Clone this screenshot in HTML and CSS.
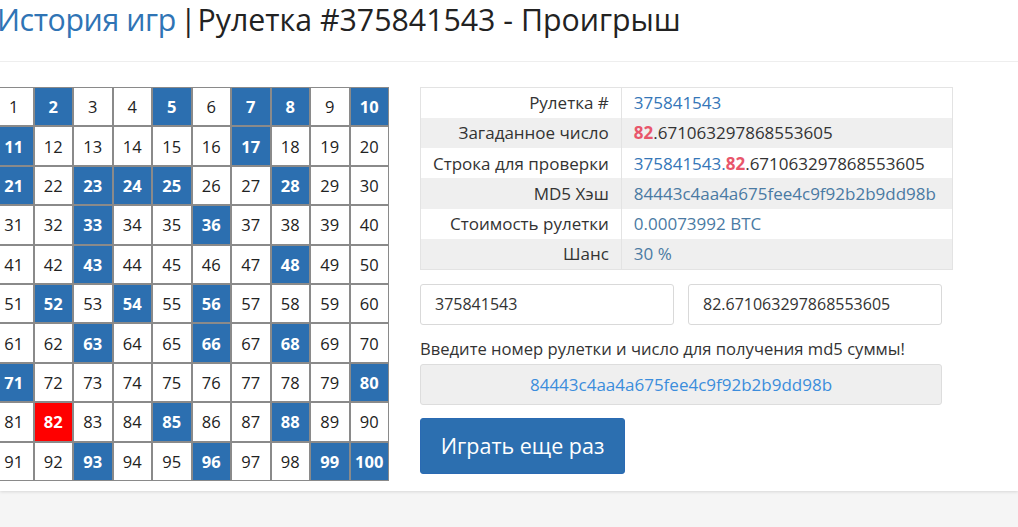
FILE: index.html
```html
<!DOCTYPE html>
<html lang="ru">
<head>
<meta charset="utf-8">
<title>Рулетка #375841543</title>
<link rel="stylesheet" href="styles.css">
</head>
<body>
<div class="page">
  <header class="head">
    <h1 class="title"><a class="crumb" href="#">История игр</a><span class="sep">|</span>Рулетка #375841543 - Проигрыш</h1>
  </header>
  <main class="content">
    <div class="board">
      <span class="c">1</span><span class="c win">2</span><span class="c">3</span><span class="c">4</span><span class="c win">5</span><span class="c">6</span><span class="c win">7</span><span class="c win">8</span><span class="c">9</span><span class="c win">10</span>
      <span class="c win">11</span><span class="c">12</span><span class="c">13</span><span class="c">14</span><span class="c">15</span><span class="c">16</span><span class="c win">17</span><span class="c">18</span><span class="c">19</span><span class="c">20</span>
      <span class="c win">21</span><span class="c">22</span><span class="c win">23</span><span class="c win">24</span><span class="c win">25</span><span class="c">26</span><span class="c">27</span><span class="c win">28</span><span class="c">29</span><span class="c">30</span>
      <span class="c">31</span><span class="c">32</span><span class="c win">33</span><span class="c">34</span><span class="c">35</span><span class="c win">36</span><span class="c">37</span><span class="c">38</span><span class="c">39</span><span class="c">40</span>
      <span class="c">41</span><span class="c">42</span><span class="c win">43</span><span class="c">44</span><span class="c">45</span><span class="c">46</span><span class="c">47</span><span class="c win">48</span><span class="c">49</span><span class="c">50</span>
      <span class="c">51</span><span class="c win">52</span><span class="c">53</span><span class="c win">54</span><span class="c">55</span><span class="c win">56</span><span class="c">57</span><span class="c">58</span><span class="c">59</span><span class="c">60</span>
      <span class="c">61</span><span class="c">62</span><span class="c win">63</span><span class="c">64</span><span class="c">65</span><span class="c win">66</span><span class="c">67</span><span class="c win">68</span><span class="c">69</span><span class="c">70</span>
      <span class="c win">71</span><span class="c">72</span><span class="c">73</span><span class="c">74</span><span class="c">75</span><span class="c">76</span><span class="c">77</span><span class="c">78</span><span class="c">79</span><span class="c win">80</span>
      <span class="c">81</span><span class="c hit">82</span><span class="c">83</span><span class="c">84</span><span class="c win">85</span><span class="c">86</span><span class="c">87</span><span class="c win">88</span><span class="c">89</span><span class="c">90</span>
      <span class="c">91</span><span class="c">92</span><span class="c win">93</span><span class="c">94</span><span class="c">95</span><span class="c win">96</span><span class="c">97</span><span class="c">98</span><span class="c win">99</span><span class="c win">100</span>
    </div>
    <section class="side">
      <table class="info">
        <tr><th>Рулетка #</th><td class="link">375841543</td></tr>
        <tr><th>Загаданное число</th><td><b class="red">82</b>.671063297868553605</td></tr>
        <tr><th>Строка для проверки</th><td><span class="link">375841543.</span><b class="red">82</b>.671063297868553605</td></tr>
        <tr><th>MD5 Хэш</th><td class="muted">84443c4aa4a675fee4c9f92b2b9dd98b</td></tr>
        <tr><th>Стоимость рулетки</th><td class="muted">0.00073992 BTC</td></tr>
        <tr><th>Шанс</th><td class="muted">30 %</td></tr>
      </table>
      <div class="fields">
        <input class="field" type="text" value="375841543">
        <input class="field" type="text" value="82.671063297868553605">
      </div>
      <p class="hint">Введите номер рулетки и число для получения md5 суммы!</p>
      <div class="hash">84443c4aa4a675fee4c9f92b2b9dd98b</div>
      <button class="btn" type="button">Играть еще раз</button>
    </section>
  </main>
</div>
</body>
</html>
```
FILE: styles.css
```css
* { box-sizing: border-box; }
html, body { margin: 0; padding: 0; }
body {
  background: #f5f5f5;
  font-family: "Open Sans", "Liberation Sans", sans-serif;
  color: #333;
  height: 527px;
  overflow: hidden;
}
.page {
  background: #fff;
  box-shadow: 0 1px 3px rgba(0,0,0,0.12);
  padding-bottom: 10px;
}
.head {
  height: 62px;
  border-bottom: 1px solid #eee;
  margin-left: -3px;
}
.title {
  margin: 0;
  padding-top: 1px;
  font-size: 30.3px;
  font-weight: 400;
  line-height: 38px;
  color: #222;
  white-space: nowrap;
}
.crumb { color: #2f74b5; text-decoration: none; letter-spacing: -0.4px; }
.sep { display: inline-block; margin: 0 1px 0 4px; color: #222; }
.content {
  display: flex;
  align-items: flex-start;
  padding-top: 25px;
  margin-left: -6px;
}
.board {
  display: grid;
  grid-template-columns: repeat(10, 39.5px);
  grid-auto-rows: 39.4px;
  flex: none;
}
.c {
  display: flex;
  align-items: center;
  justify-content: center;
  border: 1px solid #8a8a8a;
  font-size: 16.5px;
  color: #222;
  background: #fff;
}
.c.win { background: #2c6fb0; color: #fff; font-weight: 700; }
.c.hit { background: #ff0000; color: #fff; font-weight: 700; }
.side {
  margin-left: 31px;
  width: 533px;
}
.info {
  width: 533px;
  border-collapse: collapse;
  border: 1px solid #e3e3e3;
  font-size: 17px;
}
.info tr:nth-child(even) { background: #efefef; }
.info th, .info td {
  height: 30.3px;
  padding: 0 12px;
  font-weight: 400;
  white-space: nowrap;
}
.info th {
  width: 199px;
  text-align: right;
  color: #333;
  border-right: 1px solid #e3e3e3;
}
.info td { text-align: left; color: #333; }
.info .link, .link { color: #3476b8; }
.info .muted { color: #4a7aa3; }
.red { color: #e8566b; font-weight: 700; }
.fields {
  display: flex;
  gap: 14px;
  margin-top: 14px;
  width: 522px;
}
.field {
  width: 254px;
  height: 41px;
  border: 1px solid #d9d9d9;
  border-radius: 3px;
  padding: 0 14px;
  font-family: inherit;
  font-size: 16px;
  color: #333;
  background: #fff;
}
.hint {
  margin: 13px 0 4px;
  font-size: 16.6px;
  line-height: 22px;
  color: #333;
  white-space: nowrap;
}
.hash {
  width: 522px;
  height: 41px;
  display: flex;
  align-items: center;
  justify-content: center;
  background: #efefef;
  border: 1px solid #ddd;
  border-radius: 3px;
  color: #3b8ddc;
  font-size: 17px;
}
.btn {
  margin-top: 13px;
  width: 205px;
  height: 56px;
  background: #2c6fb0;
  border: 1px solid #2a6ab3;
  border-radius: 3px;
  color: #fff;
  font-family: inherit;
  font-size: 21.5px;
  padding: 0;
}
```
